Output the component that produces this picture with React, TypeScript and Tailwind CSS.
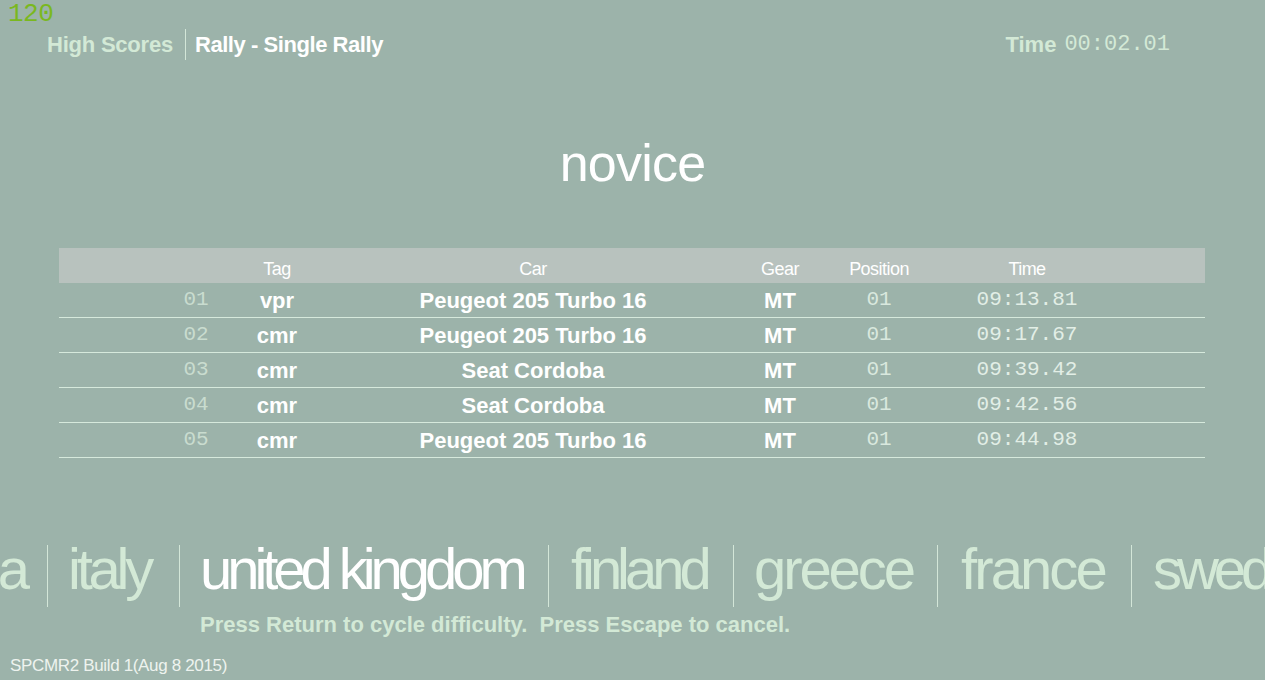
import React from "react";

const rows = [
  { rank: "01", tag: "vpr", car: "Peugeot 205 Turbo 16", gear: "MT", pos: "01", time: "09:13.81" },
  { rank: "02", tag: "cmr", car: "Peugeot 205 Turbo 16", gear: "MT", pos: "01", time: "09:17.67" },
  { rank: "03", tag: "cmr", car: "Seat Cordoba", gear: "MT", pos: "01", time: "09:39.42" },
  { rank: "04", tag: "cmr", car: "Seat Cordoba", gear: "MT", pos: "01", time: "09:42.56" },
  { rank: "05", tag: "cmr", car: "Peugeot 205 Turbo 16", gear: "MT", pos: "01", time: "09:44.98" },
];

const sans = "font-['Liberation_Sans',Arial,sans-serif]";
const mono = "font-['Liberation_Mono','DejaVu_Sans_Mono',monospace]";

function Sep() {
  return <div className="w-px h-[62px] mt-[7px] bg-[#d3e6d8] shrink-0" />;
}

export default function App() {
  return (
    <div className={`w-[1265px] h-[680px] bg-[#9cb3aa] overflow-hidden flex flex-col ${sans}`}>
      {/* fps */}
      <div className={`h-[28px] pl-[8px] pt-[1px] text-[26px] leading-[27px] text-[#7ab81f] ${mono} tracking-[-0.02em]`}>
        120
      </div>
      {/* header */}
      <div className="flex items-center h-[32px] pl-[47px] pr-[95px]">
        <span className="text-[22px] font-bold text-[#d3e9d6] tracking-[-0.01em]">High Scores</span>
        <div className="w-px h-[31px] bg-[#d3e6d8] ml-[12px] mr-[9px]" />
        <span className="text-[22px] font-bold text-white tracking-[-0.02em]">Rally - Single Rally</span>
        <div className="flex-1" />
        <span className="text-[22px] font-bold text-[#d3e9d6]">Time</span>
        <span className={`ml-[8px] text-[22px] text-[#d3e9d6] ${mono}`}>00:02.01</span>
      </div>
      {/* difficulty */}
      <div className="h-[188px] flex justify-center pt-[73px]">
        <span className="text-[52px] leading-[60px] text-white tracking-[-0.015em]">novice</span>
      </div>
      {/* table */}
      <div className="mx-[59px] w-[1146px]">
        <div className="h-[35px] pt-[7px] bg-[#b8c2be] grid grid-cols-[97px_80px_82px_430px_64px_134px_162px_97px] items-center text-[18px] text-white tracking-[-0.03em]">
          <div />
          <div />
          <div className="text-center">Tag</div>
          <div className="text-center">Car</div>
          <div className="text-center">Gear</div>
          <div className="text-center">Position</div>
          <div className="text-center">Time</div>
          <div />
        </div>
        {rows.map((r) => (
          <div
            key={r.rank}
            className="h-[35px] border-b border-[#d6e9dc] grid grid-cols-[97px_80px_82px_430px_64px_134px_162px_97px] items-center text-[22px] font-bold text-white"
          >
            <div />
            <div className={`text-center font-normal text-[21px] text-[#c9dccf] ${mono}`}>{r.rank}</div>
            <div className="text-center">{r.tag}</div>
            <div className="text-center">{r.car}</div>
            <div className="text-center">{r.gear}</div>
            <div className={`text-center font-normal text-[21px] text-[#d9e8de] ${mono}`}>{r.pos}</div>
            <div className={`text-center font-normal text-[21px] text-[#e2eee6] ${mono}`}>{r.time}</div>
            <div />
          </div>
        ))}
      </div>
      {/* countries */}
      <div className="mt-[80px] h-[69px] flex items-start whitespace-nowrap text-[58px] leading-[62px] tracking-[-0.087em] text-[#d3e9d6]">
        <div className="w-[47px] shrink-0 flex justify-end pr-[22px] overflow-hidden">
          <span className="shrink-0">australia</span>
        </div>
        <Sep />
        <div className="w-[131px] shrink-0 pl-[20px] tracking-[-0.073em]">italy</div>
        <Sep />
        <div className="w-[368px] shrink-0 pl-[20px] text-white">united kingdom</div>
        <Sep />
        <div className="w-[184px] shrink-0 pl-[22px]">finland</div>
        <Sep />
        <div className="w-[203px] shrink-0 pl-[20px] tracking-[-0.053em]">greece</div>
        <Sep />
        <div className="w-[193px] shrink-0 pl-[23px] tracking-[-0.05em]">france</div>
        <Sep />
        <div className="shrink-0 pl-[21px]">sweden</div>
      </div>
      <div className="pl-[200px] mt-[6px] text-[22px] leading-[24px] font-bold text-[#d3e9d6] whitespace-pre">
        {"Press Return to cycle difficulty.  Press Escape to cancel."}
      </div>
      <div className="pl-[10px] mt-[19px] text-[17px] leading-[20px] text-[#eef3ef] tracking-[-0.02em]">
        SPCMR2 Build 1(Aug 8 2015)
      </div>
    </div>
  );
}
